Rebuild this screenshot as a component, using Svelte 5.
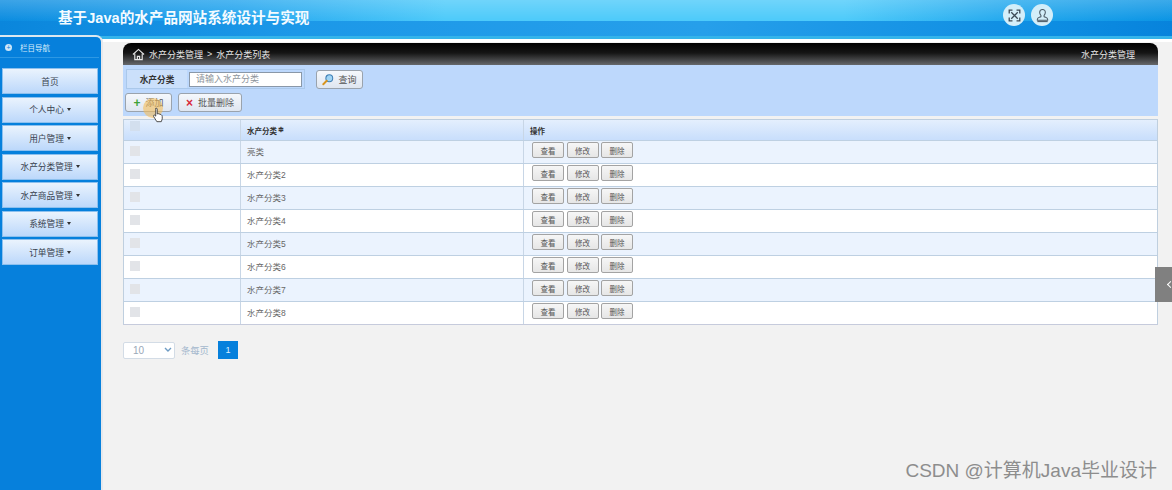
<script>
    const menus = [
        { label: '首页' },
        { label: '个人中心', caret: true },
        { label: '用户管理', caret: true },
        { label: '水产分类管理', caret: true },
        { label: '水产商品管理', caret: true },
        { label: '系统管理', caret: true },
        { label: '订单管理', caret: true }
    ];
    const rows = ['亮类', '水产分类2', '水产分类3', '水产分类4', '水产分类5', '水产分类6', '水产分类7', '水产分类8'];
</script>

<div class="page">
    <header class="topbar">
        <h1>基于Java的水产品网站系统设计与实现</h1>
        <div class="top-icons">
            <span class="round">
                <svg width="13" height="13" viewBox="0 0 16 16" fill="none" stroke="#3c4a56" stroke-width="1.600">
                    <path d="M4 4l8 8M12 4l-8 8" />
                    <path d="M1.500 5.500v-4h4M10.500 1.500h4v4M14.500 10.500v4h-4M5.500 14.500h-4v-4" />
                </svg>
            </span>
            <span class="round">
                <svg width="15" height="15" viewBox="0 0 16 16" fill="none" stroke="#4a5864" stroke-width="1.100">
                    <path d="M8 1.500c-2 0-3 1.400-3 3.200 0 1.400.6 2.400 1.300 3.100v1.500c-1.300.6-3.800 1-3.800 2.700v1h11v-1c0-1.700-2.500-2.100-3.800-2.700V7.800c.7-.7 1.300-1.700 1.300-3.100 0-1.800-1-3.200-3-3.200z" />
                    <path d="M2.500 14.500h11" />
                </svg>
            </span>
        </div>
    </header>

    <div class="body">
        <aside class="sidebar">
            <div class="nav-title">
                <span class="dot">+</span>
                <span>栏目导航</span>
            </div>
            <nav>
                {#each menus as m}
                    <div class="menu">{m.label}{#if m.caret}<i class="caret"></i>{/if}</div>
                {/each}
            </nav>
        </aside>

        <main>
            <div class="crumb">
                <div class="crumb-left">
                    <svg width="13" height="13" viewBox="0 0 14 14" fill="none" stroke="#e8e8e8" stroke-width="1.200">
                        <path d="M1 7l6-5.500L13 7" />
                        <path d="M3 6v6.500h8V6" />
                        <path d="M5.800 12.500V9h2.400v3.500" />
                    </svg>
                    <span>水产分类管理</span>
                    <span>&gt;</span>
                    <span>水产分类列表</span>
                </div>
                <span class="crumb-right">水产分类管理</span>
            </div>

            <div class="tools">
                <div class="search-row">
                    <div class="search">
                        <span class="search-label">水产分类</span>
                        <span class="search-cell"><input placeholder="请输入水产分类" /></span>
                    </div>
                    <button class="btn query">
                        <svg width="12" height="13" viewBox="0 0 14 14">
                            <circle cx="8.500" cy="5.500" r="4" fill="#9fd4f5" stroke="#3f7fb5" stroke-width="1.200" />
                            <path d="M5.500 8.500L1.500 12.500" stroke="#d8941c" stroke-width="2.200" stroke-linecap="round" />
                        </svg>
                        查询
                    </button>
                </div>
                <div class="action-row">
                    <button class="btn add"><b class="plus">+</b>添加</button>
                    <button class="btn del"><b class="cross">×</b>批量删除</button>
                </div>
                <span class="cursor-halo"></span>
                <svg class="cursor" width="12" height="16" viewBox="0 0 12 17">
                    <path d="M3.500 1.500c.8-.6 1.700 0 1.700.9v5l1-.3 1 .3 1 .3 1.300.6c.7.4 1 1 1 1.800v2.500l-1 3H4.800L1.300 10c-.5-.9.500-1.800 1.300-1.200l1 .9V2.400c0-.4 0-.7.400-.9z" fill="#fff" stroke="#333" stroke-width="0.900" />
                </svg>
            </div>

            <div class="table">
                <div class="tr th">
                    <div class="c1"><span class="check head"></span></div>
                    <div class="c2">水产分类<span class="sort">≑</span></div>
                    <div class="c3">操作</div>
                </div>
                {#each rows as r, i}
                    <div class="tr" class:alt={i % 2 === 0}>
                        <div class="c1"><span class="check"></span></div>
                        <div class="c2">{r}</div>
                        <div class="c3 ops">
                            <button class="mini">查看</button>
                            <button class="mini">修改</button>
                            <button class="mini">删除</button>
                        </div>
                    </div>
                {/each}
            </div>

            <div class="pager">
                <div class="size">
                    <span>10</span>
                    <svg width="8" height="6" viewBox="0 0 8 6" fill="none" stroke="#6f9cc4" stroke-width="1.400"><path d="M1 1l3 3 3-3" /></svg>
                </div>
                <span class="per">条每页</span>
                <span class="page-no">1</span>
            </div>
        </main>
    </div>

    <div class="side-tab"><span></span></div>
    <div class="watermark">CSDN @计算机Java毕业设计</div>
</div>

<style>
    :global(body) { margin: 0; background: #f2f2f2; }
    .page {
        position: relative;
        width: 1172px;
        height: 490px;
        overflow: hidden;
        font-family: "Liberation Sans", "Noto Sans CJK SC", sans-serif;
        background: #f2f2f2;
    }
    .topbar {
        height: 39px;
        box-sizing: border-box;
        display: flex;
        justify-content: space-between;
        align-items: flex-start;
        padding: 0 119px 0 58px;
        background:
            linear-gradient(180deg, rgba(255, 255, 255, 0.2), rgba(255, 255, 255, 0)) 0 0 / 100% 21px no-repeat,
            linear-gradient(90deg, #0b8ce0 0, #22a4ee 20%, #4ccafa 38%, #4ccafa 72%, #22a8ee 86%, #0a94e4 100%) 0 0 / 100% 21px no-repeat,
            linear-gradient(90deg, #0a86dc 0, #1c98e8 25%, #269fea 60%, #0d8de2 90%, #0783dc 100%);
        border-bottom: 3px solid #35b4ea;
    }
    h1 {
        margin: 9px 0 0;
        font-size: 14.600px;
        line-height: 18px;
        font-weight: 700;
        color: #f4fbff;
    }
    .top-icons { display: flex; gap: 6px; margin-top: 4px; }
    .round {
        width: 22px;
        height: 22px;
        border-radius: 50%;
        background: #d4eef9;
        display: flex;
        align-items: center;
        justify-content: center;
    }
    .body { display: flex; height: 451px; }
    .sidebar {
        position: relative;
        width: 103px;
        flex: none;
        margin-top: -4px;
        box-sizing: border-box;
        background: #0680dc;
        border-top-right-radius: 7px;
        border-top: 2px solid #dce8f0;
        border-right: 2px solid #e6e8ec;
        padding: 0 2px;
    }
    .nav-title {
        height: 21px;
        box-sizing: border-box;
        margin: 0 0 10px -2px;
        padding-left: 5px;
        display: flex;
        align-items: center;
        gap: 8px;
        font-size: 7.500px;
        color: #d8ecfa;
        border-bottom: 1px solid #2d98e4;
    }
    .dot {
        width: 7px;
        height: 7px;
        border-radius: 50%;
        background: #cfe6f8;
        color: #0680dc;
        font-size: 7px;
        line-height: 7px;
        text-align: center;
    }
    nav { display: flex; flex-direction: column; gap: 2.500px; }
    .menu {
        width: 96px;
        height: 26px;
        box-sizing: border-box;
        display: flex;
        align-items: center;
        justify-content: center;
        font-size: 8.700px;
        color: #3a4350;
        background: linear-gradient(180deg, #eaf3fd 0%, #bcd8fb 100%);
        border: 1px solid #8cc0ee;
    }
    .caret {
        margin-left: 3px;
        border-left: 2.500px solid transparent;
        border-right: 2.500px solid transparent;
        border-top: 3px solid #333;
    }
    main {
        flex: 1;
        min-width: 0;
        padding: 1px 14px 0 20px;
        box-sizing: border-box;
        background: #f2f2f2;
        border-top: 3px solid #fff;
    }
    .crumb {
        height: 22px;
        box-sizing: border-box;
        display: flex;
        align-items: center;
        justify-content: space-between;
        padding: 0 23px 0 9px;
        background: linear-gradient(180deg, #000 0%, #151515 45%, #66686b 100%);
        border-radius: 8px 8px 0 0;
        color: #e4e4e4;
        font-size: 9px;
    }
    .crumb-left { display: flex; align-items: center; gap: 4px; }
    .tools {
        position: relative;
        height: 51px;
        box-sizing: border-box;
        background: #bdd8fc;
        padding: 3px 0 0 3px;
    }
    .search-row { display: flex; align-items: center; gap: 11px; height: 22px; }
    .search {
        display: flex;
        height: 20px;
        width: 179px;
        box-sizing: border-box;
        border: 1px solid #aac8ea;
    }
    .search-label {
        width: 60px;
        flex: none;
        display: flex;
        align-items: center;
        justify-content: center;
        font-size: 8.700px;
        font-weight: 700;
        color: #333;
        background: #cbe0fb;
    }
    .search-cell { flex: 1; display: flex; align-items: center; padding-left: 2px; }
    input {
        width: 113px;
        height: 15px;
        box-sizing: border-box;
        border: 1px solid #8a98a8;
        padding: 0 6px;
        font: 9px "Liberation Sans", "Noto Sans CJK SC", sans-serif;
        background: #fff;
    }
    input::placeholder { color: #8e959c; }
    .btn {
        height: 19px;
        box-sizing: border-box;
        padding: 0;
        display: inline-flex;
        align-items: center;
        justify-content: center;
        gap: 4px;
        font: 9px "Liberation Sans", "Noto Sans CJK SC", sans-serif;
        color: #555;
        background: linear-gradient(180deg, #f5f8fc, #dfe6f0);
        border: 1px solid #9aa3ad;
        border-radius: 3px;
    }
    .query { width: 47px; }
    .action-row { display: flex; gap: 6px; margin: 3px 0 0 -1px; }
    .add { width: 47px; gap: 5px; }
    .del { width: 64px; gap: 5px; }
    .plus { color: #3ea337; font-size: 12px; line-height: 10px; }
    .cross { color: #d8293a; font-size: 12px; line-height: 10px; }
    .cursor-halo {
        position: absolute;
        left: 20px;
        top: 33px;
        width: 20px;
        height: 20px;
        border-radius: 50%;
        background: rgba(245, 190, 90, 0.6);
    }
    .cursor { position: absolute; left: 29px; top: 42px; }
    .table {
        margin-top: 3px;
        border: 1px solid #bfcfdf;
        border-bottom-color: #c6cbdc;
        background: #fff;
        font-size: 8.500px;
        color: #666;
    }
    .tr {
        display: grid;
        grid-template-columns: 116px 283px 1fr;
        height: 23px;
        box-sizing: border-box;
        border-top: 1px solid #bed0e2;
    }
    .tr.alt { background: #ebf3fe; }
    .th {
        height: 20px;
        border-top: 0;
        background: linear-gradient(180deg, #e4effd, #c8defc);
        color: #333;
        font-weight: 700;
        font-size: 7.500px;
    }
    .c1 { padding-left: 6px; }
    .c2, .c3 {
        border-left: 1px solid #c8d6e6;
        display: flex;
        align-items: center;
        padding-left: 6px;
    }
    .tr:not(.th) .c2 { padding-bottom: 2px; }
    .check {
        display: block;
        width: 10px;
        height: 10px;
        margin-top: 5px;
        background: #e2e4e8;
    }
    .check.head { margin-top: 1px; background: #d3dfee; }
    .sort { font-size: 7px; margin-left: 1px; }
    .ops { gap: 2.500px; padding-left: 8px; align-items: flex-start; padding-top: 1px; }
    .mini {
        width: 32px;
        height: 16px;
        box-sizing: border-box;
        padding: 0;
        font: 7.500px "Liberation Sans", "Noto Sans CJK SC", sans-serif;
        color: #555;
        background: linear-gradient(180deg, #f6f6f6, #e6e6e6);
        border: 1px solid #a3a3a3;
        border-radius: 2px;
    }
    .pager { display: flex; align-items: center; margin-top: 16px; height: 18px; }
    .size {
        width: 52px;
        height: 17px;
        box-sizing: border-box;
        display: flex;
        align-items: center;
        justify-content: space-between;
        padding: 0 2px 0 9px;
        background: #fff;
        border: 1px solid #d3dce6;
        border-radius: 2px;
        font-size: 10px;
        color: #9aa8b8;
    }
    .per { margin-left: 6px; font-size: 9.300px; color: #a3b7cd; }
    .page-no {
        margin-left: 9px;
        width: 20px;
        height: 18px;
        background: #0680dc;
        color: #dcefff;
        font-size: 9px;
        display: flex;
        align-items: center;
        justify-content: center;
    }
    .side-tab {
        position: absolute;
        left: 1155px;
        top: 267px;
        width: 17px;
        height: 35px;
        background: #808080;
    }
    .side-tab span {
        position: absolute;
        left: 13px;
        top: 15px;
        width: 4px;
        height: 4px;
        border-left: 1.500px solid #fff;
        border-bottom: 1.500px solid #fff;
        transform: rotate(45deg);
    }
    .watermark {
        position: absolute;
        right: 15px;
        top: 460px;
        font-size: 19px;
        line-height: 22px;
        color: #8d8d8d;
    }
</style>
